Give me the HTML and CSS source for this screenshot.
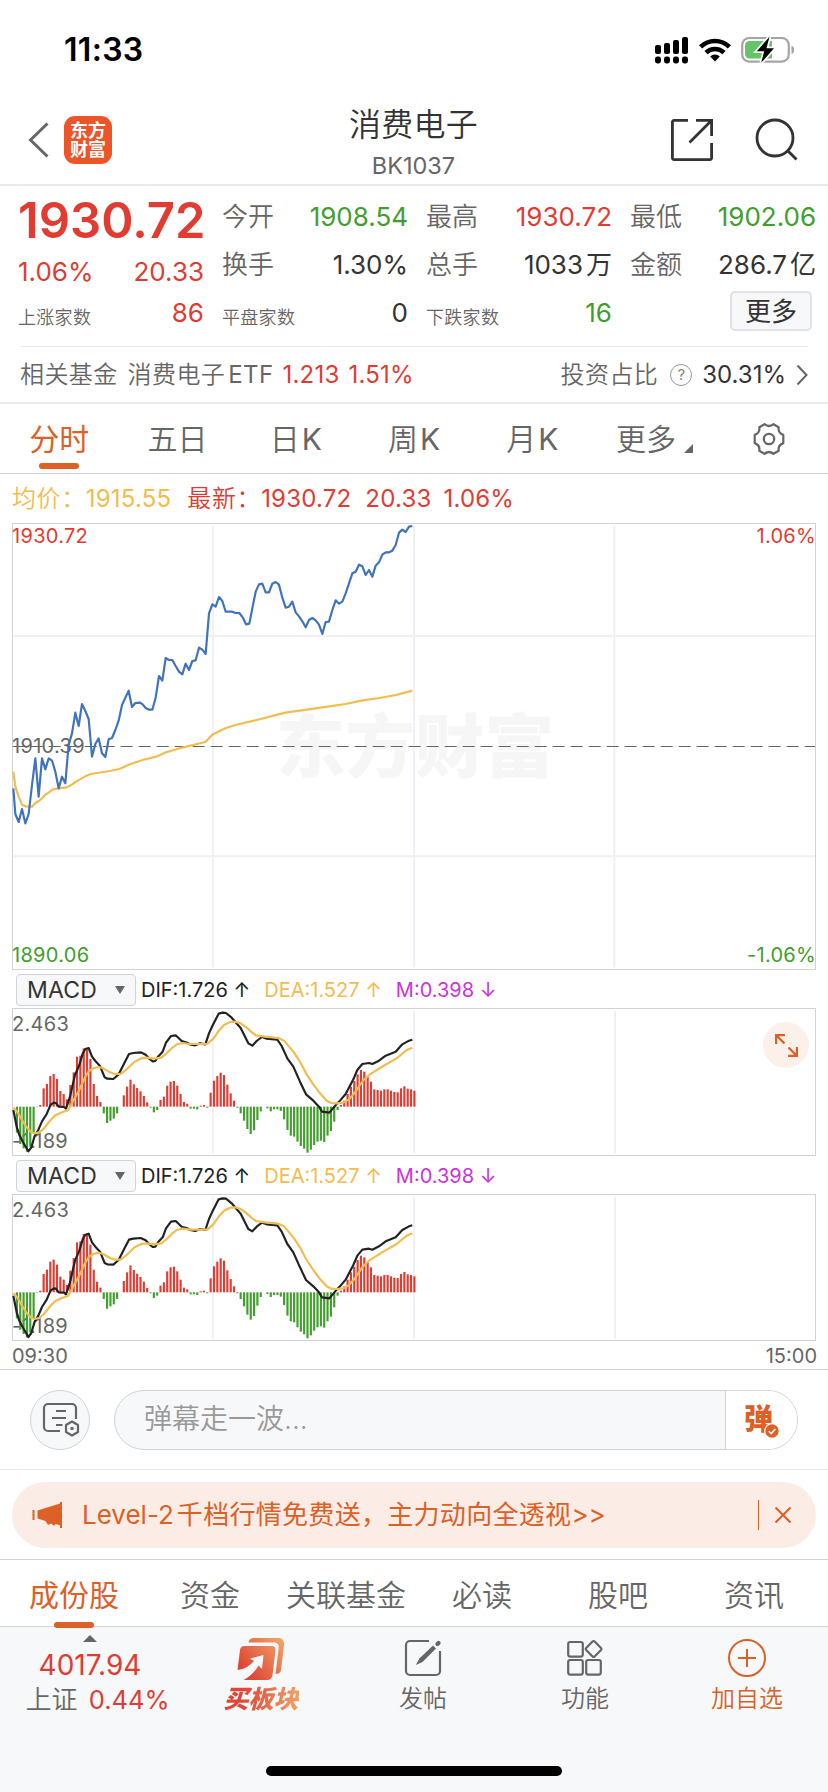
FILE: index.html
```html
<!DOCTYPE html>
<html lang="zh-CN">
<head>
    <meta charset="UTF-8">
    <meta name="viewport" content="width=device-width, initial-scale=1.0">
    <title>消费电子 BK1037</title>
    <link rel="stylesheet" href="styles.css">
</head>
<body>
<div class="page">
    <!-- Status bar -->
    <div class="status-bar">
        <span class="time">11:33</span>
        <div class="status-icons">
            <svg class="signal" width="35" height="27" viewBox="0 0 35 27">
                <g fill="#000">
                    <rect x="1" y="8" width="6" height="9" rx="2"/>
                    <rect x="10" y="6" width="6" height="11" rx="2"/>
                    <rect x="19" y="3" width="6" height="14" rx="2"/>
                    <rect x="28" y="0" width="6" height="17" rx="2"/>
                    <rect x="1" y="19.500" width="6" height="7" rx="2.400"/>
                    <rect x="10" y="19.500" width="6" height="7" rx="2.400"/>
                    <rect x="19" y="19.500" width="6" height="7" rx="2.400"/>
                    <rect x="28" y="19.500" width="6" height="7" rx="2.400"/>
                </g>
            </svg>
            <svg class="wifi" width="32" height="24" viewBox="0 0 32 24">
                <g fill="none" stroke="#000" stroke-width="4.600">
                    <path d="M1.600 8.800a20.600 20.600 0 0 1 28.800 0"/>
                    <path d="M7 14.600a13 13 0 0 1 18 0"/>
                </g>
                <path d="M16 23.400l-4.800-5a6.800 6.800 0 0 1 9.600 0z" fill="#000"/>
            </svg>
            <svg class="battery" width="54" height="28" viewBox="0 0 54 28">
                <rect x="1.200" y="2" width="46.600" height="23.600" rx="7" fill="none" stroke="#a5a5a5" stroke-width="2.200"/>
                <path d="M50.500 9.500c3.500 1.200 3.500 7.400 0 8.600z" fill="#a5a5a5"/>
                <path d="M8.500 5h22.500v17.600H8.500a4.500 4.500 0 0 1-4.500-4.500v-8.600a4.500 4.500 0 0 1 4.500-4.500z" fill="#65c466"/>
                <path d="M28.500 0.800L15.800 15.200h7.400l-3 11.600L33 12.200h-7.500z" fill="#000" stroke="#fff" stroke-width="3.400" paint-order="stroke"/>
            </svg>
        </div>
    </div>

    <!-- Header -->
    <div class="header">
        <div class="header-left">
            <svg class="back" width="22" height="36" viewBox="0 0 22 36">
                <path d="M19.500 1.500L2.500 18l17 16.500" fill="none" stroke="#666" stroke-width="3"/>
            </svg>
            <div class="logo"><span>东方</span><span>财富</span></div>
        </div>
        <div class="header-title">
            <h1>消费电子</h1>
            <p>BK1037</p>
        </div>
        <div class="header-right">
            <svg width="44" height="44" viewBox="0 0 44 44" fill="none" stroke="#333" stroke-width="2.800">
                <path d="M18 2.400H4a1.600 1.600 0 0 0-1.600 1.600v36a1.600 1.600 0 0 0 1.600 1.600h36a1.600 1.600 0 0 0 1.600-1.600V25"/>
                <path d="M26 2.400h15.600V18M41 3L19.500 24.500"/>
            </svg>
            <svg width="44" height="44" viewBox="0 0 44 44" fill="none" stroke="#333" stroke-width="2.800">
                <circle cx="20" cy="20" r="18"/>
                <path d="M32.500 32.500l9 9"/>
            </svg>
        </div>
    </div>

    <!-- Quote -->
    <div class="quote">
        <div class="quote-col main">
            <div class="price up">1930.72</div>
            <div class="cell change"><span class="val up">1.06%</span><span class="val up">20.33</span></div>
            <div class="cell count"><span class="small">上涨家数</span><span class="val up">86</span></div>
        </div>
        <div class="quote-col">
            <div class="cell"><span class="name">今开</span><span class="val down">1908.54</span></div>
            <div class="cell"><span class="name">换手</span><span class="val">1.30%</span></div>
            <div class="cell"><span class="small">平盘家数</span><span class="val">0</span></div>
        </div>
        <div class="quote-col">
            <div class="cell"><span class="name">最高</span><span class="val up">1930.72</span></div>
            <div class="cell"><span class="name">总手</span><span class="val">1033<i>万</i></span></div>
            <div class="cell"><span class="small">下跌家数</span><span class="val down">16</span></div>
        </div>
        <div class="quote-col">
            <div class="cell"><span class="name">最低</span><span class="val down">1902.06</span></div>
            <div class="cell"><span class="name">金额</span><span class="val">286.7<i>亿</i></span></div>
            <button class="more-btn">更多</button>
        </div>
    </div>

    <!-- Related fund -->
    <div class="fund">
        <span class="fund-label">相关基金</span>
        <span class="fund-label fund-name">消费电子<b>ETF</b></span>
        <span class="fund-num up">1.213</span>
        <span class="fund-num up">1.51%</span>
        <span class="fund-label fund-ratio">投资占比</span>
        <span class="help">?</span>
        <span class="fund-num">30.31%</span>
        <svg width="12" height="22" viewBox="0 0 12 22"><path d="M1.500 1.500L10.500 11l-9 9.500" fill="none" stroke="#666" stroke-width="2"/></svg>
    </div>

    <!-- Period tabs -->
    <div class="period-tabs">
        <span class="active">分时</span>
        <span>五日</span>
        <span>日<b>K</b></span>
        <span>周<b>K</b></span>
        <span>月<b>K</b></span>
        <span class="dropdown">更多</span>
        <span class="gear">
            <svg width="36" height="36" viewBox="0 0 36 36" fill="none" stroke="#666" stroke-width="2.200" stroke-linejoin="round">
                <path d="M13.500 3.200q4.500 3.600 9 0l5.200 3q-.9 5.600 4.600 7.700v8.200q-5.500 2.100-4.600 7.700l-5.200 3q-4.500-3.600-9 0l-5.200-3q.9-5.600-4.600-7.700v-8.200q5.500-2.100 4.600-7.700z"/>
                <circle cx="18" cy="18" r="5.200"/>
            </svg>
        </span>
    </div>

    <div class="latest">
        <span class="avg">均价：<b>1915.55</b></span>
        <span class="up">最新：<b>1930.72</b></span>
        <span class="up"><b>20.33</b></span>
        <span class="up"><b>1.06%</b></span>
    </div>

    <!-- Price chart -->
    <div class="chart price-chart">
        <span class="watermark">东方财富</span>
        <span class="label top-left up">1930.72</span>
        <span class="label top-right up">1.06%</span>
        <span class="label mid-left">1910.39</span>
        <span class="label bottom-left down">1890.06</span>
        <span class="label bottom-right down">-1.06%</span>
        <svg width="804" height="447" viewBox="36 39 2412 1341">
            <path class="grid-line" d="M639 48V1372M1242 48V1372M1843 48V1372M38 378H2445M38 1039H2445"/>
            <path class="mid-line" d="M38 709.500H2445"/>
            <polyline class="line-avg" points="40,785 46,830 56,860 66,884 76,889 96,890 106,879 116,873 126,865 136,854 147,847 157,839 170,836 200,832 212,826 226,816 240,808 256,799 272,792 290,789 330,783 358,777 386,764 428,750 468,740 498,727 550,712 616,696 637,674 672,656 706,645 770,630 856,608 920,599 967,592 1037,582 1088,571 1138,564 1188,555 1237,542"/>
            <polyline class="line-price" points="40,835 46,912 56,936 66,897 76,940 86,912 96,825 106,745 116,860 126,745 136,778 146,745 156,752 166,785 176,835 186,800 196,820 201,760 206,705 216,670 226,608 236,648 246,582 256,603 266,627 276,740 286,702 296,685 306,730 316,741 326,688 336,684 346,660 356,632 366,585 386,542 396,591 406,579 420,578 428,583 437,594 447,599 457,599 467,563 477,498 487,512 497,444 507,450 517,450 527,468 537,485 547,493 557,461 567,480 577,453 587,451 597,413 607,419 617,432 627,310 637,283 647,290 657,261 667,273 677,305 697,305 707,309 718,309 728,322 738,343 748,341 757,295 767,245 777,223 787,221 797,247 807,247 817,221 827,216 837,224 847,263 857,293 867,290 877,275 887,307 897,319 907,334 917,352 927,330 937,324 947,331 957,344 967,372 977,336 987,335 997,300 1007,271 1017,281 1027,275 1037,250 1047,220 1057,190 1067,185 1077,164 1087,169 1097,195 1107,180 1117,200 1127,167 1137,157 1147,134 1157,127 1167,127 1177,122 1187,105 1197,68 1207,59 1217,66 1227,50 1237,48"/>
        </svg>
    </div>

    <!-- MACD 1 -->
    <div class="indicator">
        <button class="indicator-btn">MACD</button>
        <span class="dif">DIF:1.726 ↑</span>
        <span class="dea">DEA:1.527 ↑</span>
        <span class="macd">M:0.398 ↓</span>
    </div>
    <div class="chart macd-chart">
        <span class="label top-left">2.463</span>
        <span class="label bottom-left">-1.189</span>
        <svg width="804" height="148" viewBox="36 144 2412 444">
            <path class="grid-line" d="M639 153V579M1242 153V579M1845 153V579"/>
            <g class="bars"></g>
            <g id="macd-lines">
                <polyline class="line-dif" points="40,450 50,500 58,525 70,548 85,574 94,562 104,528 114,512 126,484 140,462 152,434 162,428 168,429 176,440 192,441 198,446 210,410 225,345 238,315 248,281 256,267 266,264 276,290 286,303 300,318 314,352 322,356 340,357 356,343 372,311 387,282 400,279 422,277 437,284 447,295 458,304 466,303 474,290 488,275 498,248 513,228 527,226 545,243 562,248 570,253 586,256 600,250 616,253 627,220 637,198 656,161 668,158 678,159 695,173 722,204 745,250 757,257 770,243 786,231 800,236 832,239 845,258 862,295 880,320 900,365 918,403 940,422 957,440 966,455 988,458 1010,432 1020,422 1037,402 1060,358 1072,330 1087,312 1107,309 1117,312 1137,302 1157,287 1187,275 1207,253 1227,242 1237,239"/>
                <polyline class="line-avg" points="40,443 52,456 66,480 80,502 94,517 104,520 118,517 132,505 150,482 166,466 186,457 204,451 216,430 236,393 254,355 266,334 280,325 296,321 310,325 330,337 344,342 362,342 380,328 404,305 424,295 440,293 462,296 484,293 500,280 516,264 530,253 548,249 570,252 622,252 640,236 655,214 672,195 690,186 706,185 722,190 740,203 754,216 768,226 795,230 835,234 852,242 880,275 900,305 918,340 940,373 960,400 980,422 994,429 1010,430 1030,428 1046,419 1066,396 1088,363 1108,344 1150,318 1190,295 1220,270 1237,263"/>
            </g>
        </svg>
        <button class="expand-btn">
            <svg width="24" height="24" viewBox="0 0 24 24" fill="none" stroke="#dd6026" stroke-width="2.200">
                <path d="M11 2.100H2.100V11M2.500 2.500L10.500 10.500M22.900 14v8.900H14M22.500 22.500L14.500 14.500"/>
            </svg>
        </button>
    </div>

    <!-- MACD 2 -->
    <div class="indicator">
        <button class="indicator-btn">MACD</button>
        <span class="dif">DIF:1.726 ↑</span>
        <span class="dea">DEA:1.527 ↑</span>
        <span class="macd">M:0.398 ↓</span>
    </div>
    <div class="chart macd-chart second">
        <span class="label top-left">2.463</span>
        <span class="label bottom-left">-1.189</span>
        <svg width="804" height="147" viewBox="36 145 2412 441">
            <path class="grid-line" d="M639 153V579M1242 153V579M1845 153V579"/>
            <g class="bars"></g>
            <use href="#macd-lines"/>
        </svg>
    </div>
    <div class="time-axis"><span>09:30</span><span>15:00</span></div>

    <!-- Comment bar -->
    <div class="comment-bar">
        <button class="comment-settings">
            <svg width="40" height="40" viewBox="0 0 40 40" fill="none" stroke="#666" stroke-width="2.200">
                <path d="M20 31H8a4 4 0 0 1-4-4V8a4 4 0 0 1 4-4h24a4 4 0 0 1 4 4v11" />
                <path d="M16 11h10M12 18h14M16 25h6.500"/>
                <path d="M32 21.500l6 3.500v7l-6 3.500-6-3.500v-7z" stroke-linejoin="round"/>
                <circle cx="32" cy="28.500" r="1" fill="#666" stroke-width="1.500"/>
            </svg>
        </button>
        <div class="comment-input">
            <span class="placeholder">弹幕走一波...</span>
            <div class="danmu">
                <span>弹</span>
                <svg width="16" height="16" viewBox="0 0 16 16">
                    <circle cx="8" cy="8" r="7.300" fill="#dd6026" stroke="#fff" stroke-width="1.200"/>
                    <path d="M4.800 8.200l2.400 2.400 4.200-4.600" fill="none" stroke="#fff" stroke-width="1.600"/>
                </svg>
            </div>
        </div>
    </div>

    <!-- Promo banner -->
    <div class="banner-wrap">
        <div class="banner">
            <svg class="horn" width="32" height="28" viewBox="0 0 32 28" fill="#dd6026">
                <path d="M0.500 9h2v10H0.500zM5.500 9.500L28 2.500V1h2v26h-2v-2.800l-4.500-1.200-1.500 2-3-2.500-3 1.500-2.500-4-8-2.500z"/>
            </svg>
            <span class="banner-text">Level-2<i>千档行情免费送，主力动向全透视</i>&gt;&gt;</span>
            <span class="banner-sep"></span>
            <svg width="18" height="18" viewBox="0 0 18 18"><path d="M1.500 1.500l15 15M16.500 1.500l-15 15" stroke="#dd6026" stroke-width="2"/></svg>
        </div>
    </div>

    <!-- Content tabs -->
    <div class="content-tabs">
        <span class="active">成份股</span>
        <span>资金</span>
        <span>关联基金</span>
        <span>必读</span>
        <span>股吧</span>
        <span>资讯</span>
    </div>

    <!-- Bottom bar -->
    <div class="bottom-bar">
        <div class="index">
            <span class="index-arrow"></span>
            <span class="index-value">4017.94</span>
            <span class="index-name">上证 <b>0.44%</b></span>
        </div>
        <div class="tool buy">
            <svg width="50" height="44" viewBox="0 0 50 44">
                <defs>
                    <linearGradient id="buy-grad" gradientUnits="userSpaceOnUse" x1="4" y1="40" x2="46" y2="4">
                        <stop offset="0.150" stop-color="#de4635"/>
                        <stop offset="1" stop-color="#f0a366"/>
                    </linearGradient>
                </defs>
                <g fill="url(#buy-grad)">
                    <path d="M12.500 5.500q.8-4.500 5-4.500H42q7 0 6 7.500L45 33q-.5 4-5.500 4l3.200-26q.6-5.500-5-5.500z"/>
                    <path d="M8.500 9H36q4 0 3.500 4.500L36.500 38q-.7 5-5.500 5H7.500Q18 37 22.500 28.500l3.500 3.500L27.500 18 14 21.500l4 2.500Q12 31.500 1.500 33L4 13q.6-4 4.500-4z"/>
                </g>
            </svg>
            <span>买板块</span>
        </div>
        <div class="tool">
            <svg width="40" height="40" viewBox="0 0 40 40" fill="none" stroke="#666" stroke-width="2.200">
                <path d="M26 3H7a4 4 0 0 0-4 4v26a4 4 0 0 0 4 4h26a4 4 0 0 0 4-4V13"/>
                <path d="M12.800 27l3.600-6.400L30 7.600l3 3L19.500 24z" fill="#666" stroke="none"/>
                <path d="M34.500 6l1-1" stroke-width="4.200" stroke-linecap="round"/>
            </svg>
            <span>发帖</span>
        </div>
        <div class="tool">
            <svg width="40" height="40" viewBox="0 0 40 40" fill="none" stroke="#666" stroke-width="2.200">
                <rect x="3.200" y="4" width="14.600" height="14.600" rx="2"/>
                <rect x="3.200" y="22" width="14.600" height="14.600" rx="2"/>
                <rect x="21.200" y="22" width="14.600" height="14.600" rx="2"/>
                <rect x="22.600" y="5" width="12" height="12" rx="1.500" transform="rotate(45 28.600 11)"/>
            </svg>
            <span>功能</span>
        </div>
        <div class="tool add">
            <svg width="40" height="40" viewBox="0 0 40 40" fill="none" stroke="#dd6026" stroke-width="2">
                <circle cx="20" cy="20" r="18"/>
                <path d="M11 20h18M20 11v18"/>
            </svg>
            <span>加自选</span>
        </div>
    </div>
    <div class="home-indicator"></div>
</div>

<script src="main.js"></script>
</body>
</html>
```
FILE: styles.css
```css
* {
    margin: 0;
    padding: 0;
    box-sizing: border-box;
}

body {
    font-family: Inter, 'Noto Sans CJK SC', sans-serif;
    font-weight: 400;
    line-height: 1.2;
    background: #fff;
    color: #333;
}

b, i {
    font-weight: 400;
    font-style: normal;
}

svg {
    display: block;
    flex: none;
}

button {
    font-family: inherit;
    border: none;
    cursor: pointer;
}

.page {
    width: 828px;
    height: 1792px;
    overflow: hidden;
    display: flex;
    flex-direction: column;
}

.page > div {
    flex: none;
}

.up {
    color: #e03c32;
}

.down {
    color: #419e2c;
}

/* status bar */
.status-bar {
    height: 100px;
    padding: 0 33px 0 64px;
    display: flex;
    justify-content: space-between;
    align-items: center;
}

.time {
    font-size: 32px;
    font-weight: 600;
    letter-spacing: 0.3px;
    color: #000;
}

.status-icons {
    display: flex;
    align-items: center;
    gap: 10px;
}

/* header */
.header {
    height: 86px;
    padding: 0 29px 0 28px;
    display: grid;
    grid-template-columns: 1fr auto 1fr;
    border-bottom: 2px solid #ebebeb;
}

.header-left {
    display: flex;
    align-items: flex-start;
    gap: 14px;
    padding-top: 16px;
}

.back {
    margin-top: 6px;
}

.logo {
    width: 48px;
    height: 48px;
    border-radius: 11px;
    background: #ec5528;
    color: #fff;
    font-size: 18px;
    font-weight: 700;
    line-height: 19px;
    display: flex;
    flex-direction: column;
    align-items: center;
    justify-content: center;
}

.header-title {
    text-align: center;
}

.header-title h1 {
    font-size: 32px;
    font-weight: 350;
    letter-spacing: 0.3px;
    line-height: 49px;
}

.header-title p {
    font-size: 23.5px;
    line-height: 33px;
    color: #666;
}

.header-right {
    display: flex;
    justify-content: flex-end;
    gap: 41px;
    padding-top: 18px;
}

/* quote */
.quote {
    height: 160px;
    margin: 0 12px 0 18px;
    display: grid;
    grid-template-columns: repeat(4, 186px);
    column-gap: 18px;
    padding-top: 7px;
}

.price {
    height: 56px;
    font-size: 49px;
    font-weight: 600;
    line-height: 56px;
    white-space: nowrap;
}

.cell {
    height: 48px;
    display: flex;
    justify-content: space-between;
    align-items: center;
    line-height: 32px;
    white-space: nowrap;
}

.change {
    height: 46px;
}

.count {
    height: 36px;
}

.name {
    font-size: 26px;
    font-weight: 350;
    color: #666;
}

.val {
    font-size: 26px;
}

.val i {
    margin-left: 3px;
}

.small {
    font-size: 18px;
    font-weight: 350;
    letter-spacing: 0.3px;
    color: #666;
    padding-top: 9px;
}

.more-btn {
    display: block;
    width: 82px;
    height: 40px;
    margin: 2px 4px 0 auto;
    background: #f7f8fa;
    border: 2px solid #e1e2e8;
    border-radius: 5px;
    font-size: 26px;
    line-height: 37px;
    color: #333;
}

/* related fund */
.fund {
    height: 56px;
    margin: 0 20px;
    padding-top: 1px;
    border-top: 1px solid #ebebeb;
    display: flex;
    align-items: center;
    font-size: 24px;
    color: #666;
    white-space: nowrap;
}

.fund-label {
    font-weight: 350;
    letter-spacing: 0.4px;
}

.fund-name {
    margin-left: 10px;
}

.fund-name b {
    margin-left: 3px;
}

.fund-num {
    margin-left: 10px;
    color: #333;
}

.fund-num.up {
    margin-left: 9px;
    letter-spacing: 0.2px;
    color: #e03c32;
}

.fund-ratio {
    margin-left: auto;
}

.help {
    width: 22px;
    height: 22px;
    margin-left: 12px;
    border: 1.5px solid #999;
    border-radius: 50%;
    font-size: 15px;
    line-height: 20px;
    text-align: center;
    color: #888;
}

.fund svg {
    margin-left: 10px;
}

/* period tabs */
.period-tabs {
    height: 72px;
    border-top: 2px solid #ebebeb;
    border-bottom: 1px solid #d2d3d7;
    display: grid;
    grid-template-columns: repeat(7, 1fr);
    font-size: 30px;
    font-weight: 350;
    color: #666;
}

.period-tabs span {
    position: relative;
    display: flex;
    align-items: center;
    justify-content: center;
}

.period-tabs b {
    margin-left: 2px;
}

.period-tabs .active,
.content-tabs .active {
    color: #dd6026;
    font-weight: 400;
}

.active::after {
    content: '';
    position: absolute;
    left: 50%;
    bottom: 4px;
    width: 40px;
    height: 6px;
    margin-left: -20px;
    border-radius: 3px;
    background: #dd6026;
}

.period-tabs .dropdown {
    padding-left: 8px;
}

.dropdown::after {
    content: '';
    align-self: flex-end;
    margin: 0 0 20px 8px;
    border-left: 9px solid transparent;
    border-bottom: 9px solid #666;
}

.latest {
    height: 49px;
    padding: 2px 0 0 12px;
    display: flex;
    align-items: center;
    gap: 14px;
    font-size: 24px;
    font-weight: 350;
    letter-spacing: 0.6px;
    white-space: nowrap;
}

.latest b {
    letter-spacing: 0.2px;
}

.latest .avg {
    margin-right: 2px;
}

.latest span:last-child {
    margin-left: -2px;
}

.avg {
    color: #f3bc4f;
}

/* charts */
.chart {
    position: relative;
    margin: 0 12px;
    border: 1px solid #d2d3d7;
}

.price-chart > svg,
.macd-chart > svg {
    position: absolute;
    top: -1px;
    left: -1px;
}

.price-chart {
    height: 447px;
}

.macd-chart {
    height: 148px;
}

.macd-chart.second {
    height: 147px;
}

.watermark {
    position: absolute;
    left: 263px;
    top: 173px;
    font-size: 69.5px;
    font-weight: 900;
    line-height: 100px;
    color: #f6f6f6;
}

.label {
    position: absolute;
    font-size: 20px;
    line-height: 24px;
    letter-spacing: 0.3px;
    color: #666;
}

.label.up {
    color: #e03c32;
}

.label.down {
    color: #419e2c;
}

.top-left {
    left: -1px;
    top: 0;
}

.top-right {
    right: -1px;
    top: 0;
}

.mid-left {
    left: -1px;
    top: 210px;
}

.bottom-left {
    left: -1px;
    bottom: 2px;
}

.bottom-right {
    right: -1px;
    bottom: 2px;
}

.macd-chart .top-left {
    top: 3px;
}

.grid-line {
    fill: none;
    stroke: #f0f0f6;
    stroke-width: 6;
}

.mid-line {
    stroke: #666;
    stroke-width: 3;
    stroke-dasharray: 36 18;
}

.line-price,
.line-avg,
.line-dif {
    fill: none;
    stroke-width: 6.500;
    stroke-linejoin: round;
}

.line-price {
    stroke: #3f72bf;
}

.line-avg {
    stroke: #f3bc4f;
}

.line-dif {
    stroke: #222;
}

.bar-up {
    fill: #e03c32;
}

.bar-down {
    fill: #41a02a;
}

.indicator {
    height: 38px;
    padding: 1px 16px 0;
    display: flex;
    align-items: center;
    font-size: 20px;
    white-space: nowrap;
}

.indicator-btn {
    width: 120px;
    height: 32px;
    padding: 0 10px 0 10px;
    display: flex;
    align-items: center;
    justify-content: space-between;
    background: #f7f8fa;
    border: 1px solid #d2d3d7;
    border-radius: 4px;
    font-size: 23px;
    letter-spacing: 0.2px;
    color: #333;
}

.indicator-btn::after {
    content: '';
    border: 5px solid transparent;
    border-top: 8px solid #666;
    border-bottom: none;
}

.dif {
    margin-left: 5px;
    color: #222;
}

.dea {
    margin-left: 14px;
    color: #f3bc4f;
}

.macd {
    margin-left: 14px;
    color: #cc33dd;
}

.expand-btn {
    position: absolute;
    right: 6px;
    top: 13px;
    width: 46px;
    height: 46px;
    border-radius: 50%;
    background: #fcf0ea;
    display: flex;
    align-items: center;
    justify-content: center;
}

.time-axis {
    height: 29px;
    padding: 1px 11px 0 12px;
    border-bottom: 1px solid #d2d3d7;
    display: flex;
    justify-content: space-between;
    align-items: center;
    font-size: 20px;
    color: #666;
}

/* comment bar */
.comment-bar {
    height: 100px;
    padding: 0 30px;
    border-bottom: 1px solid #ebebeb;
    display: flex;
    align-items: center;
    gap: 24px;
}

.comment-settings {
    width: 60px;
    height: 60px;
    border: 1px solid #d2d3dc;
    border-radius: 50%;
    background: #f7f8fa;
    display: flex;
    align-items: center;
    justify-content: center;
}

.comment-input {
    flex: 1;
    height: 60px;
    border: 1px solid #d2d3dc;
    border-radius: 30px;
    background: #f7f8fa;
    display: flex;
    align-items: center;
    overflow: hidden;
}

.placeholder {
    flex: 1;
    padding: 0 0 2px 29px;
    font-size: 28px;
    font-weight: 350;
    line-height: 40px;
    color: #999;
}

.danmu {
    position: relative;
    width: 72px;
    height: 100%;
    padding-left: 18px;
    border-left: 1px solid #d2d3dc;
    background: #fff;
    font-size: 29px;
    font-weight: 900;
    line-height: 58px;
    color: #dd6026;
}

.danmu svg {
    position: absolute;
    left: 38px;
    top: 32px;
}

/* banner */
.banner-wrap {
    height: 90px;
    padding: 12px 12px 0;
    border-bottom: 1px solid #d2d3d7;
}

.banner {
    height: 66px;
    padding: 0 24px 0 20px;
    border-radius: 33px;
    background: #fbede6;
    display: flex;
    align-items: center;
    color: #dd6026;
}

.banner-text {
    flex: 1;
    margin-left: 18px;
    font-size: 26px;
    white-space: nowrap;
}

.banner-text i {
    margin-left: 3px;
    letter-spacing: 0.3px;
}

.banner-sep {
    width: 1px;
    height: 30px;
    margin-right: 15px;
    background: #dd6026;
}

/* content tabs */
.content-tabs {
    height: 67px;
    padding: 2px 6px 0;
    border-bottom: 1px solid #d2d3d7;
    display: grid;
    grid-template-columns: repeat(6, 136px);
    text-align: center;
    font-size: 30px;
    font-weight: 350;
    color: #666;
}

.content-tabs span {
    position: relative;
    line-height: 66px;
}

.content-tabs .active::after {
    bottom: 0;
}

/* bottom bar */
.bottom-bar {
    height: 139px;
    background: #f7f8fa;
    display: grid;
    grid-template-columns: 180px repeat(4, 162px);
}

.index {
    padding: 8px 0 0 15px;
    display: flex;
    flex-direction: column;
    align-items: center;
    white-space: nowrap;
}

.index-arrow {
    border: 7px solid transparent;
    border-top: none;
    border-bottom: 7px solid #666;
    margin-right: 15px;
}

.index-value {
    margin-right: 15px;
    font-size: 28px;
    line-height: 46px;
    color: #e03c32;
}

.index-name {
    font-size: 26px;
    font-weight: 350;
    line-height: 24px;
    color: #666;
}

.index-name b {
    margin-left: 4px;
    font-size: 25.5px;
    color: #e03c32;
}

.tool {
    padding-top: 11px;
    display: flex;
    flex-direction: column;
    align-items: center;
    font-size: 24px;
    font-weight: 350;
    line-height: 42px;
    color: #666;
}

.buy {
    padding-top: 10px;
}

.buy span {
    margin-top: -3px;
    font-size: 25px;
    font-weight: 900;
    font-style: italic;
    background: linear-gradient(90deg, #de4635 25%, #f0a366);
    -webkit-background-clip: text;
    background-clip: text;
    color: transparent;
}

.add {
    color: #dd6026;
}

.home-indicator {
    height: 26px;
    background: #f7f8fa;
}

.home-indicator::after {
    content: '';
    display: block;
    width: 296px;
    height: 10px;
    margin: 0 auto;
    border-radius: 5px;
    background: #000;
}
```
FILE: main.js
```js
// MACD histogram, one value per minute, positive = up
const bars = [
    0, -78, -112, -125, -135, -120, -78, -1, 5, 55, 68, 92, 98, 83, 47, 38, 22, 65, 103, 150,
    153, 175, 172, 143, 68, 32, 14, -20, -49, -42, -36, -20, 0, 34, 60, 81, 67, 56, 46, 32,
    13, -3, -17, -10, 20, 30, 63, 75, 77, 63, 38, 14, 9, -6, -6, -8, 3, 5, -3, 42,
    78, 92, 102, 95, 66, 40, 18, -3, -20, -42, -67, -82, -71, -40, -14, 0, -5, -14, -8, -8,
    -13, -38, -70, -87, -90, -105, -118, -126, -138, -129, -115, -105, -102, -106, -87, -73, -45, -10, 5, 18,
    38, 60, 77, 97, 110, 105, 90, 75, 52, 50, 48, 52, 52, 48, 44, 43, 55, 61, 54, 52, 48
];
const zeroY = 440;
const step = 10.02;

document.querySelectorAll('.bars').forEach(group => {
    bars.forEach((value, i) => {
        const rect = document.createElementNS('http://www.w3.org/2000/svg', 'rect');
        rect.setAttribute('class', value > 0 ? 'bar-up' : 'bar-down');
        rect.setAttribute('x', 37.5 + i * step);
        rect.setAttribute('y', value > 0 ? zeroY - value : zeroY);
        rect.setAttribute('width', 6.5);
        rect.setAttribute('height', Math.abs(value));
        group.appendChild(rect);
    });
});
```
